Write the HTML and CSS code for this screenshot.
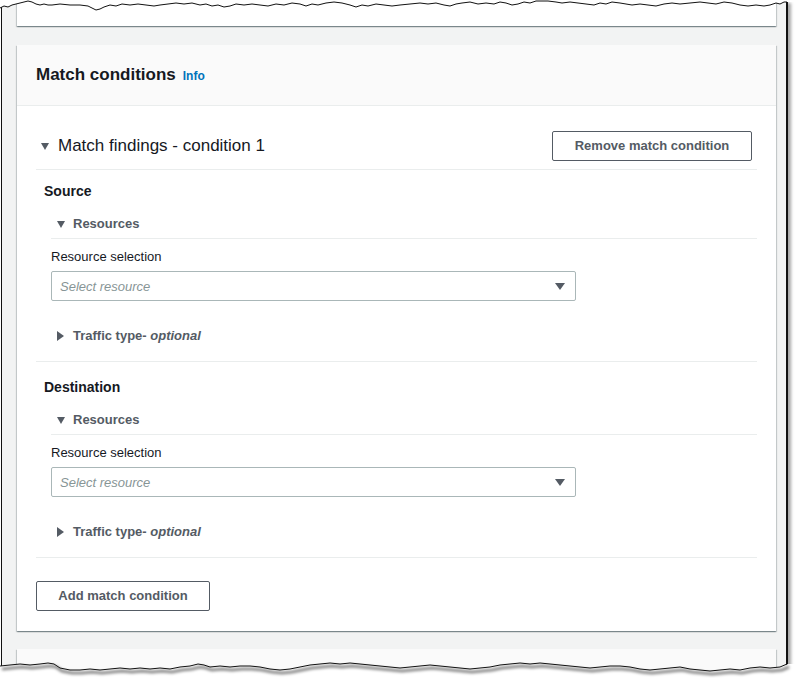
FILE: index.html
```html
<!DOCTYPE html>
<html lang="en">
<head>
<meta charset="utf-8">
<title>Match conditions</title>
<link rel="stylesheet" href="styles.css">
</head>
<body>
<div class="frame">
  <div class="card card-top"></div>
  <section class="card">
    <header class="card-header">
      <h2 class="card-title">Match conditions</h2>
      <a class="info" href="#">Info</a>
    </header>
    <div class="card-body">
      <div class="cond-header">
        <div class="cond-title"><span class="tri tri-down-lg"></span>Match findings - condition 1</div>
        <button class="btn btn-remove" type="button">Remove match condition</button>
      </div>

      <div class="group group-source">
        <h3 class="group-title">Source</h3>
        <div class="sub">
          <div class="sub-title"><span class="tri tri-down"></span>Resources</div>
          <div class="field">
            <div class="label">Resource selection</div>
            <div class="select"><span class="placeholder">Select resource</span><span class="tri tri-select"></span></div>
          </div>
          <div class="sub-title collapsed"><span class="tri tri-right"></span>Traffic type-&nbsp;<em>optional</em></div>
        </div>
      </div>

      <div class="group group-dest">
        <h3 class="group-title">Destination</h3>
        <div class="sub">
          <div class="sub-title"><span class="tri tri-down"></span>Resources</div>
          <div class="field">
            <div class="label">Resource selection</div>
            <div class="select"><span class="placeholder">Select resource</span><span class="tri tri-select"></span></div>
          </div>
          <div class="sub-title collapsed"><span class="tri tri-right"></span>Traffic type-&nbsp;<em>optional</em></div>
        </div>
      </div>

      <button class="btn btn-add" type="button">Add match condition</button>
    </div>
  </section>
  <div class="card card-bottom"></div>
</div>

<svg class="tear" width="800" height="685" viewBox="0 0 800 685" xmlns="http://www.w3.org/2000/svg">
  <defs>
    <filter id="blur" x="-5%" y="-50%" width="110%" height="200%">
      <feGaussianBlur stdDeviation="1.6"/>
    </filter>
  </defs>
  <path fill="#ffffff" d="M0,0 L0,8 L4,6 L8,7 L12,5 L16,4 L20,3 L24,2 L28,1 L32,2 L36,4 L40,5 L44,4 L48,5 L52,5 L60,4 L70,5 L80,5 L88,6 L92,8 L96,10 L100,9 L104,7 L110,5 L116,6 L122,4 L130,5 L138,4 L146,5 L154,6 L160,5 L168,4 L176,3 L184,4 L192,3 L200,5 L206,4 L212,6 L218,5 L224,7 L230,6 L236,4 L244,5 L252,4 L260,5 L268,6 L276,4 L284,5 L292,3 L300,4 L306,6 L312,4 L318,5 L326,3 L334,2 L342,3 L350,5 L356,7 L362,5 L368,6 L376,4 L384,5 L392,6 L400,5 L410,4 L420,3 L428,4 L436,3 L444,5 L450,6 L456,4 L462,3 L470,2 L478,4 L486,3 L494,4 L500,2 L506,3 L512,5 L518,4 L524,2 L530,3 L536,1 L542,1 L548,1 L556,2 L562,3 L570,2 L578,3 L586,4 L594,5 L600,3 L606,4 L612,2 L620,3 L626,4 L632,5 L640,4 L648,5 L656,6 L664,4 L672,3 L680,4 L690,3 L700,2 L708,3 L716,4 L724,2 L732,3 L740,5 L748,6 L756,5 L764,6 L770,5 L776,3 L780,4 L784,2 L788,2 L800,2 L800,0 Z"/>
  <polyline fill="none" stroke="#111111" stroke-width="1" points="0,8 4,6 8,7 12,5 16,4 20,3 24,2 28,1 32,2 36,4 40,5 44,4 48,5 52,5 60,4 70,5 80,5 88,6 92,8 96,10 100,9 104,7 110,5 116,6 122,4 130,5 138,4 146,5 154,6 160,5 168,4 176,3 184,4 192,3 200,5 206,4 212,6 218,5 224,7 230,6 236,4 244,5 252,4 260,5 268,6 276,4 284,5 292,3 300,4 306,6 312,4 318,5 326,3 334,2 342,3 350,5 356,7 362,5 368,6 376,4 384,5 392,6 400,5 410,4 420,3 428,4 436,3 444,5 450,6 456,4 462,3 470,2 478,4 486,3 494,4 500,2 506,3 512,5 518,4 524,2 530,3 536,1 542,1 548,1 556,2 562,3 570,2 578,3 586,4 594,5 600,3 606,4 612,2 620,3 626,4 632,5 640,4 648,5 656,6 664,4 672,3 680,4 690,3 700,2 708,3 716,4 724,2 732,3 740,5 748,6 756,5 764,6 770,5 776,3 780,4 784,2 787,2"/>
  <path fill="#ffffff" d="M0,666 L10,665 L20,664 L30,665 L40,664 L48,663 L54,664 L60,668 L70,670 L80,670 L90,669 L100,670 L110,669 L120,668 L130,669 L140,668 L150,669 L160,668 L170,669 L180,667 L190,666 L198,664 L204,665 L210,667 L220,666 L230,667 L240,666 L250,666 L260,667 L270,669 L280,670 L290,669 L300,667 L310,665 L320,664 L330,663 L340,664 L350,663 L360,664 L370,665 L380,666 L390,667 L400,668 L410,667 L420,666 L430,665 L440,666 L450,667 L460,668 L470,669 L480,668 L490,667 L500,665 L510,664 L520,663 L530,664 L540,663 L550,664 L560,665 L570,666 L580,667 L590,668 L600,667 L610,666 L620,666 L630,667 L640,669 L650,670 L660,669 L670,668 L680,667 L690,669 L700,670 L710,671 L720,670 L730,669 L740,670 L750,668 L760,667 L770,668 L780,667 L788,664 L800,664 L800,685 L0,685 Z"/>
  <polyline fill="none" stroke="rgba(0,0,0,0.55)" stroke-width="2.5" filter="url(#blur)" transform="translate(2,3)" points="0,666 10,665 20,664 30,665 40,664 48,663 54,664 60,668 70,670 80,670 90,669 100,670 110,669 120,668 130,669 140,668 150,669 160,668 170,669 180,667 190,666 198,664 204,665 210,667 220,666 230,667 240,666 250,666 260,667 270,669 280,670 290,669 300,667 310,665 320,664 330,663 340,664 350,663 360,664 370,665 380,666 390,667 400,668 410,667 420,666 430,665 440,666 450,667 460,668 470,669 480,668 490,667 500,665 510,664 520,663 530,664 540,663 550,664 560,665 570,666 580,667 590,668 600,667 610,666 620,666 630,667 640,669 650,670 660,669 670,668 680,667 690,669 700,670 710,671 720,670 730,669 740,670 750,668 760,667 770,668 780,667 787,664"/>
  <polyline fill="none" stroke="#111111" stroke-width="1" points="0,666 10,665 20,664 30,665 40,664 48,663 54,664 60,668 70,670 80,670 90,669 100,670 110,669 120,668 130,669 140,668 150,669 160,668 170,669 180,667 190,666 198,664 204,665 210,667 220,666 230,667 240,666 250,666 260,667 270,669 280,670 290,669 300,667 310,665 320,664 330,663 340,664 350,663 360,664 370,665 380,666 390,667 400,668 410,667 420,666 430,665 440,666 450,667 460,668 470,669 480,668 490,667 500,665 510,664 520,663 530,664 540,663 550,664 560,665 570,666 580,667 590,668 600,667 610,666 620,666 630,667 640,669 650,670 660,669 670,668 680,667 690,669 700,670 710,671 720,670 730,669 740,670 750,668 760,667 770,668 780,667 787,664"/>
</svg>
</body>
</html>
```

FILE: styles.css
```css
* { box-sizing: border-box; }

html, body {
  margin: 0;
  padding: 0;
  background: #ffffff;
}

body {
  width: 800px;
  height: 685px;
  overflow: hidden;
  position: relative;
  font-family: "Liberation Sans", Arial, sans-serif;
  color: #16191f;
}

.frame {
  margin-left: 1px;
  width: 787px;
  height: 685px;
  background: #f2f3f3;
  border-left: 1px solid #111111;
  border-right: 2px solid #111111;
  box-shadow: 3px 3px 3px rgba(0, 0, 0, 0.35);
  padding: 0 9px 0 15px;
  overflow: hidden;
}

.card {
  background: #ffffff;
  margin-right: 1px;
  box-shadow: 0 1px 1px 0 rgba(0, 28, 36, 0.3),
              1px 1px 1px 0 rgba(0, 28, 36, 0.15),
              -1px 1px 1px 0 rgba(0, 28, 36, 0.15);
}

.card-top {
  height: 26px;
  margin-bottom: 19px;
}

.card-bottom {
  margin-top: 18px;
  height: 80px;
  background: #fafafa;
}

.card-header {
  display: flex;
  align-items: baseline;
  gap: 7px;
  height: 61px;
  padding: 19px 19px 0;
  background: #fafafa;
  border-bottom: 1px solid #eaeded;
}

.card-title {
  margin: 0;
  font-size: 17px;
  line-height: 22px;
  font-weight: 700;
  color: #16191f;
}

.info {
  font-size: 12px;
  font-weight: 700;
  color: #0073bb;
  text-decoration: none;
}

.card-body {
  padding: 25px 19px 20px 19px;
}

.cond-header {
  display: flex;
  align-items: center;
  justify-content: space-between;
  padding: 0 5px 8px 5px;
  border-bottom: 1px solid #eaeded;
}

.cond-title {
  display: flex;
  align-items: center;
  font-size: 17px;
  line-height: 22px;
  color: #16191f;
}

.btn {
  height: 30px;
  padding: 0 19px;
  border: 1px solid #545b64;
  border-radius: 2px;
  background: #ffffff;
  color: #545b64;
  font-family: "Liberation Sans", Arial, sans-serif;
  font-size: 13px;
  font-weight: 700;
  line-height: 28px;
}

.btn-remove {
  width: 200px;
  padding: 0;
}

.btn-add {
  display: block;
  margin-top: 23px;
  width: 174px;
  padding: 0;
}

.group {
  padding: 0 0 15px 8px;
  border-bottom: 1px solid #eaeded;
}

.group-source { margin-top: 11px; }
.group-dest { margin-top: 15px; }

.group-title {
  margin: 0;
  font-size: 14px;
  line-height: 20px;
  font-weight: 700;
  color: #16191f;
}

.sub {
  margin-left: 7px;
  margin-top: 13px;
}

.sub-title {
  display: flex;
  align-items: center;
  padding: 0 0 4px 6px;
  font-size: 13px;
  line-height: 20px;
  font-weight: 700;
  color: #545b64;
  border-bottom: 1px solid #eaeded;
}

.sub-title em {
  font-style: italic;
  font-weight: 700;
  color: #545b64;
}

.sub-title.collapsed {
  border-bottom: none;
  padding-bottom: 0;
  margin-top: 25px;
}

.field {
  padding-top: 9px;
}

.label {
  font-size: 13px;
  line-height: 18px;
  color: #16191f;
}

.select {
  display: flex;
  align-items: center;
  justify-content: space-between;
  margin-top: 5px;
  width: 525px;
  height: 30px;
  padding: 0 10px 0 8px;
  border: 1px solid #aab7b8;
  border-radius: 2px;
  background: #ffffff;
}

.placeholder {
  font-size: 13px;
  font-style: italic;
  color: #879596;
}

.tri {
  display: inline-block;
  width: 0;
  height: 0;
  flex: none;
}

.tri-down-lg {
  border-left: 4.5px solid transparent;
  border-right: 4.5px solid transparent;
  border-top: 7px solid #545b64;
  margin-right: 9px;
}

.tri-down {
  border-left: 4.5px solid transparent;
  border-right: 4.5px solid transparent;
  border-top: 7px solid #545b64;
  margin-right: 8px;
}

.tri-right {
  border-top: 5px solid transparent;
  border-bottom: 5px solid transparent;
  border-left: 7px solid #545b64;
  margin-right: 9px;
}

.tri-select {
  border-left: 5px solid transparent;
  border-right: 5px solid transparent;
  border-top: 7px solid #545b64;
}

.tear {
  position: absolute;
  left: 0;
  top: 0;
  pointer-events: none;
}
```
